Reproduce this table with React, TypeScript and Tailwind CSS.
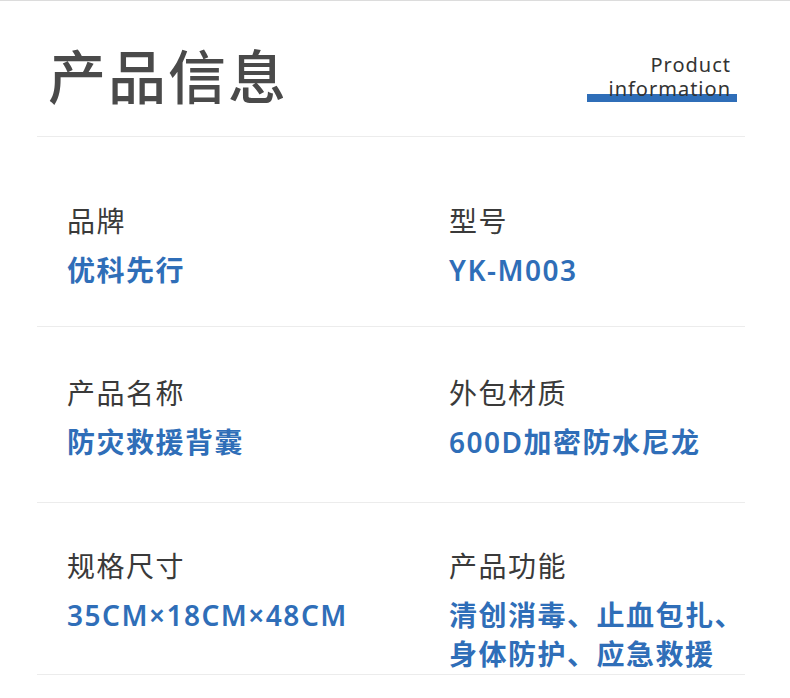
import React from "react";

const cjk = { fontFamily: '"Noto Sans CJK SC", "Noto Sans", sans-serif' };
const mixed = { fontFamily: '"Noto Sans", "Noto Sans CJK SC", sans-serif' };

type Item = { label: string; value: string[] };

function Cell({ item }: { item: Item }) {
  return (
    <div className="flex flex-col">
      <div className="text-[28px] leading-[36px] tracking-[1.5px] text-[#3a3a3a] font-normal">{item.label}</div>
      <div className="mt-[13px] text-[28px] leading-[39px] tracking-[1.5px] text-[#2f6eb8] font-semibold" style={mixed}>
        {item.value.map((v, i) => (
          <div key={i}>{v}</div>
        ))}
      </div>
    </div>
  );
}

export default function App() {
  const rows: { h: string; pt: string; items: Item[] }[] = [
    {
      h: "h-[190px]",
      pt: "pt-[65px]",
      items: [
        { label: "品牌", value: ["优科先行"] },
        { label: "型号", value: ["YK-M003"] },
      ],
    },
    {
      h: "h-[176px]",
      pt: "pt-[47px]",
      items: [
        { label: "产品名称", value: ["防灾救援背囊"] },
        { label: "外包材质", value: ["600D加密防水尼龙"] },
      ],
    },
    {
      h: "h-[172px]",
      pt: "pt-[44px]",
      items: [
        { label: "规格尺寸", value: ["35CM×18CM×48CM"] },
        { label: "产品功能", value: ["清创消毒、止血包扎、", "身体防护、应急救援"] },
      ],
    },
  ];

  return (
    <div className="w-[790px] h-[698px] bg-white border-t border-[#dcdcdc] overflow-hidden" style={cjk}>
      <div className="relative ml-[37px] w-[708px] h-[136px] border-b border-[#ececec] flex justify-between">
        <div className="pl-[11px] pt-[43px] text-[58px] leading-[60px] tracking-[2px] font-medium text-[#4a4a4a]">
          产品信息
        </div>
        <div className="absolute left-[550px] w-[150px] top-[93px] h-[8px] bg-[#2f6eb8]" />
        <div className="relative pt-[52px] pr-[14px]">
          <div
            className="text-right text-[20px] leading-[24px] tracking-[1px] text-[#333333]"
            style={{ fontFamily: '"Noto Sans", "Open Sans", sans-serif' }}
          >
            <div>Product</div>
            <div>information</div>
          </div>
        </div>
      </div>
      {rows.map((r, i) => (
        <div key={i} className={`ml-[37px] w-[708px] pl-[30px] border-b border-[#ececec] grid grid-cols-[382px_1fr] ${r.h} ${r.pt}`}>
          {r.items.map((it, j) => (
            <Cell key={j} item={it} />
          ))}
        </div>
      ))}
    </div>
  );
}
